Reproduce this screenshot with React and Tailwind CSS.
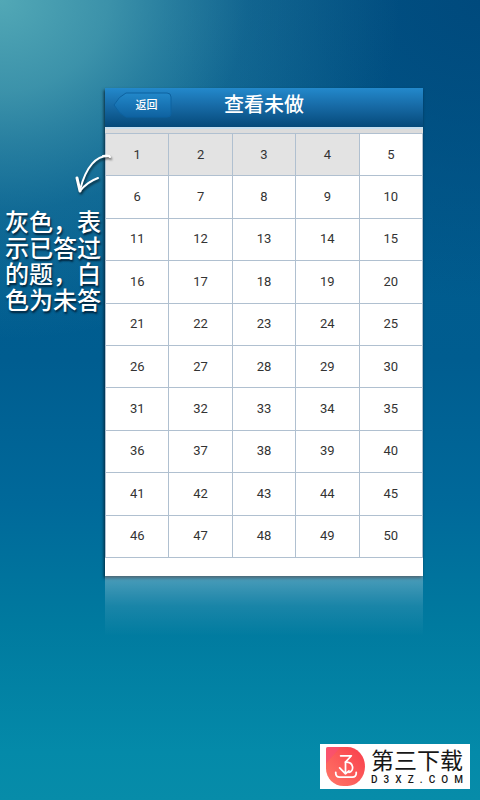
import React, { useState } from 'react'

const ROWS = 10
const COLUMNS = 5

const Header = () => {
  return (
    <header className="grid grid-cols-[1fr_auto_1fr] h-[39px] items-start bg-linear-to-b from-[#2389cc] via-[#1668a3] to-[#054a7a]">
      <button
        type="button"
        className="relative mt-1 ml-2 flex h-[27px] w-[59px] items-center justify-center pl-2 text-[11px] leading-none font-medium text-white"
      >
        <svg
          viewBox="0 0 59 27"
          preserveAspectRatio="none"
          className="absolute inset-0 h-full w-full"
          aria-hidden="true"
        >
          <defs>
            <linearGradient id="back" x1="0" y1="0" x2="0" y2="1">
              <stop offset="0" stopColor="#2288ca" />
              <stop offset="1" stopColor="#0f62a0" />
            </linearGradient>
          </defs>
          <path
            d="M1 13 Q6 4 13 1 H54 Q58 1 58 5 V22 Q58 25 54 25 H13 Q6 22 1 13Z"
            fill="url(#back)"
            stroke="#0d62a0"
          />
        </svg>
        <span className="relative">返回</span>
      </button>
      <h1 className="mt-[5px] text-xl leading-6 font-medium text-white">查看未做</h1>
    </header>
  )
}

const QuestionTable = ({ answered, onSelect }) => {
  const rows = Array.from({ length: ROWS }, (_, row) =>
    Array.from({ length: COLUMNS }, (_, col) => row * COLUMNS + col + 1)
  )

  return (
    <table className="h-[425px] w-full table-fixed border-collapse bg-white">
      <tbody>
        {rows.map((row) => (
          <tr key={row[0]}>
            {row.map((number) => (
              <td
                key={number}
                className={`border border-[#b0c0d0] p-0 text-center ${
                  answered.includes(number) ? 'bg-[#e3e3e3]' : 'bg-white'
                }`}
              >
                <button
                  type="button"
                  onClick={() => onSelect(number)}
                  className="w-full py-2 font-[Roboto,sans-serif] text-[13px] leading-5 text-[#333333]"
                >
                  {number}
                </button>
              </td>
            ))}
          </tr>
        ))}
      </tbody>
    </table>
  )
}

const Note = () => {
  return (
    <aside className="relative z-10 pt-[66px] pl-[5px]">
      <svg
        viewBox="0 0 40 42"
        className="ml-[68px] h-[42px] w-10 max-w-none drop-shadow-[1px_2px_1px_rgba(0,0,0,0.6)]"
        fill="none"
        stroke="white"
        strokeLinecap="round"
        strokeLinejoin="round"
        aria-hidden="true"
      >
        <path d="M36 2 C24 1 13 12 7 36" strokeWidth="2" />
        <path d="M30 2 C34 1 36 1 37 3" strokeWidth="2" />
        <path d="M4 24 L7 37" strokeWidth="3" />
        <path d="M7 37 Q14 28 25 24" strokeWidth="2" />
      </svg>
      <p className="mt-3 w-[98px] font-['Noto_Sans_CJK_SC',sans-serif] text-2xl leading-[26px] font-medium text-white [text-shadow:1px_2px_2px_rgba(0,25,45,0.9)]">
        灰色，表示已答过的题，白色为未答
      </p>
    </aside>
  )
}

const Brand = () => {
  return (
    <footer className="mr-[10px] mb-[11px] flex h-[45px] items-center gap-[6px] self-end bg-white pr-[7px] pl-[6px]">
      <svg viewBox="0 0 40 40" className="size-[39px]" aria-hidden="true">
        <defs>
          <linearGradient id="logo" x1="0" y1="1" x2="1" y2="0">
            <stop offset="0" stopColor="#ff7868" />
            <stop offset="1" stopColor="#f93d4b" />
          </linearGradient>
        </defs>
        <path
          d="M2 0 H22 A18 20 0 0 1 22 40 H18 C8 40 0 32 0 22 V2 Q0 0 2 0Z"
          fill="url(#logo)"
        />
        <path d="M0 2 Q0 0 2 0 H15 L0 17Z" fill="#f84d78" opacity="0.6" />
        <g
          fill="none"
          stroke="white"
          strokeWidth="1.8"
          strokeLinecap="round"
          strokeLinejoin="round"
        >
          <path d="M15 9 H26 L20 15.5 C29 15 29 25 23.5 26" />
          <path d="M20 15.5 V27.5 M14 21.5 L20 27.5 L23.5 24.5" />
          <path d="M10 26 V27 Q10 31 14 31 H27 Q31 31 31 27 V26" />
        </g>
      </svg>
      <div className="flex flex-col text-[#171717]">
        <span className="text-[23px] leading-[26px]">第三下载</span>
        <span className="flex justify-between font-[Roboto,sans-serif] text-[10px] leading-[12px] font-medium">
          {[...'D3XZ.COM'].map((letter, i) => (
            <span key={i}>{letter}</span>
          ))}
        </span>
      </div>
    </footer>
  )
}

const App = () => {
  const [answered, setAnswered] = useState([1, 2, 3, 4])

  const handleSelect = (number) => {
    if (!answered.includes(number)) {
      setAnswered([...answered, number])
    }
  }

  return (
    <div className="flex min-h-screen flex-col justify-between bg-[radial-gradient(ellipse_400px_340px_at_0_0,#52a8b6_0%,#52a8b6b8_27%,#52a8b67a_42%,#52a8b633_62%,#52a8b600_100%),radial-gradient(ellipse_320px_300px_at_100%_0,#004a7d_0%,#004a7d88_50%,#004a7d00_100%),linear-gradient(to_bottom,#02588a_0%,#005d90_45%,#00699a_63%,#007a9f_78%,#048aa9_94%,#078ca9_100%)] font-['Liberation_Sans','Noto_Sans_CJK_SC',sans-serif]">
      <div className="grid grid-cols-[105px_minmax(0,1fr)] pt-[88px] pr-[57px]">
        <Note />
        <div>
          <main className="bg-white pb-[18px] shadow-[-1px_2px_3px_rgba(0,25,40,0.85)]">
            <Header />
            <div className="h-[6px] border-t-2 border-[#c5dff0] bg-[#dcdcdc]" />
            <QuestionTable answered={answered} onSelect={handleSelect} />
          </main>
          <div className="h-[60px] bg-linear-to-b from-white/30 via-white/10 to-transparent" />
        </div>
      </div>
      <Brand />
    </div>
  )
}

export default App
